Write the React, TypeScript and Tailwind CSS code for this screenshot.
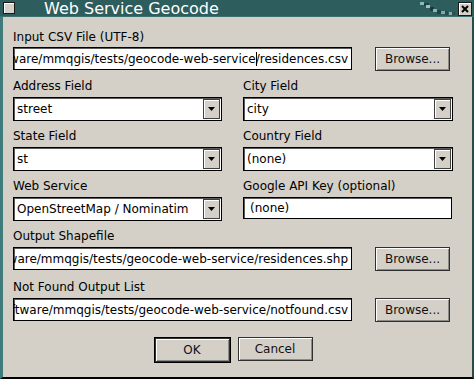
import * as React from "react";

const font = "font-['DejaVu_Sans',sans-serif]";

const TextBox = ({ value, width, cursorAt }: { value: string; width: string; cursorAt?: number }) => (
  <div
    className={`${width} h-[23px] bg-white border border-black shadow-[inset_1px_1px_0_#5a5a5a] flex items-center justify-end overflow-hidden whitespace-nowrap pr-[3px] text-[12px] text-black`}
  >
    {cursorAt === undefined ? (
      <span>{value}</span>
    ) : (
      <span className="flex items-center">
        {value.slice(0, cursorAt)}
        <span className="inline-block w-px h-[14px] bg-black -mr-px" />
        {value.slice(cursorAt)}
      </span>
    )}
  </div>
);

const Combo = ({ value }: { value: string }) => (
  <div className="w-full h-[24px] bg-white border border-black shadow-[inset_1px_1px_0_#5a5a5a] flex items-center text-[12px] text-black">
    <span className="flex-1 pl-[3px] whitespace-nowrap overflow-hidden">{value}</span>
    <div className="w-[17px] h-[20px] mr-px bg-[#d4d0c8] border border-[#404040] shadow-[inset_1px_1px_0_#ffffff] flex items-center justify-center">
      <svg width="7" height="4" viewBox="0 0 7 4">
        <path d="M0 0h7L3.5 4z" fill="#000" />
      </svg>
    </div>
  </div>
);

const Button = ({ label, width, isDefault }: { label: string; width: string; isDefault?: boolean }) => (
  <div className={isDefault ? "border border-black" : ""}>
    <div
      className={`${width} h-[24px] bg-[#d4d0c8] border border-[#303030] shadow-[inset_1px_1px_0_#ffffff,inset_-1px_-1px_0_#8a8a86] flex items-center justify-center text-[12px] text-[#111]`}
    >
      {label}
    </div>
  </div>
);

const Label = ({ children }: { children: React.ReactNode }) => (
  <div className="h-[15px] leading-[15px] text-[12px] text-black whitespace-nowrap">{children}</div>
);

export default function App() {
  return (
    <div className={`w-[474px] h-[379px] flex flex-col bg-[#d4d0c8] ${font}`}>
      {/* title bar */}
      <div className="relative h-[17px] bg-[#2e5d5d] border-b border-[#3f7070] flex items-center">
        <div className="ml-[3px] w-[12px] h-[12px] bg-[#d4d0c8] border border-[#1a1a1a] shadow-[inset_1px_1px_0_#ffffff]" />
        <div className="ml-[29px] text-[16px] leading-[17px] text-white">Web Service Geocode</div>
        <svg className="absolute left-[420px] top-[1px]" width="36" height="15" viewBox="0 0 36 15">
          <rect x="0" y="1" width="4" height="3" fill="#8fb8b8" />
          <rect x="4" y="2" width="5" height="3" fill="#1f4040" />
          <rect x="6" y="4" width="4" height="3" fill="#9cc2c2" />
          <rect x="10" y="6" width="4" height="4" fill="#1c3a3a" />
          <rect x="13" y="8" width="4" height="3" fill="#8ab2b2" />
          <rect x="17" y="9" width="4" height="4" fill="#1f4242" />
          <rect x="21" y="10" width="4" height="3" fill="#7ea8a8" />
          <rect x="25" y="10" width="3" height="4" fill="#244a4a" />
          <rect x="29" y="11" width="3" height="3" fill="#86aeae" />
          <rect x="32" y="11" width="3" height="3" fill="#2a5050" />
        </svg>
        <div className="absolute left-[458px] top-[2px] w-[14px] h-[14px] bg-[#d4d0c8] border border-[#1a1a1a] shadow-[inset_1px_1px_0_#ffffff] flex items-center justify-center">
          <svg width="8" height="8" viewBox="0 0 8 8">
            <path d="M1 1L7 7M7 1L1 7" stroke="#000" strokeWidth="2" />
          </svg>
        </div>
      </div>

      {/* body */}
      <div className="flex-1 flex flex-col border-l-[3px] border-l-[#3f7b7b] border-r-[2px] border-r-[#2a4a4a] border-b-[2px] border-b-black pl-[10px] pt-[13px]">
        <Label>Input CSV File (UTF-8)</Label>
        <div className="mt-[2px] flex items-start gap-[23px]">
          <TextBox
            width="w-[339px]"
            value="/home/michael/software/mmqgis/tests/geocode-web-service/residences.csv"
            cursorAt={"/home/michael/software/mmqgis/tests/geocode-web-service".length}
          />
          <Button label="Browse..." width="w-[75px]" />
        </div>

        <div className="mt-[8px] grid grid-cols-[209px_210px] gap-x-[21px]">
          <div>
            <Label>Address Field</Label>
            <div className="mt-[3px]">
              <Combo value="street" />
            </div>
          </div>
          <div>
            <Label>City Field</Label>
            <div className="mt-[3px]">
              <Combo value="city" />
            </div>
          </div>

          <div className="mt-[8px]">
            <Label>State Field</Label>
            <div className="mt-[3px]">
              <Combo value="st" />
            </div>
          </div>
          <div className="mt-[8px]">
            <Label>Country Field</Label>
            <div className="mt-[3px]">
              <Combo value="(none)" />
            </div>
          </div>

          <div className="mt-[8px]">
            <Label>Web Service</Label>
            <div className="mt-[3px]">
              <Combo value="OpenStreetMap / Nominatim" />
            </div>
          </div>
          <div className="mt-[8px]">
            <Label>Google API Key (optional)</Label>
            <div className="mt-[3px] w-[209px] h-[22px] bg-white border border-black shadow-[inset_1px_1px_0_#5a5a5a] flex items-center pl-[6px] text-[12px] text-black">
              (none)
            </div>
          </div>
        </div>

        <div className="mt-[8px]">
          <Label>Output Shapefile</Label>
        </div>
        <div className="mt-[3px] flex items-start gap-[23px]">
          <TextBox width="w-[339px]" value="/home/michael/software/mmqgis/tests/geocode-web-service/residences.shp" />
          <Button label="Browse..." width="w-[75px]" />
        </div>

        <div className="mt-[9px]">
          <Label>Not Found Output List</Label>
        </div>
        <div className="mt-[3px] flex items-start gap-[23px]">
          <TextBox width="w-[339px]" value="/home/michael/software/mmqgis/tests/geocode-web-service/notfound.csv" />
          <Button label="Browse..." width="w-[75px]" />
        </div>

        <div className="mt-[15px] flex justify-center gap-[7px] pr-[19px]">
          <Button label="OK" width="w-[75px]" isDefault />
          <Button label="Cancel" width="w-[75px]" />
        </div>
      </div>
    </div>
  );
}
